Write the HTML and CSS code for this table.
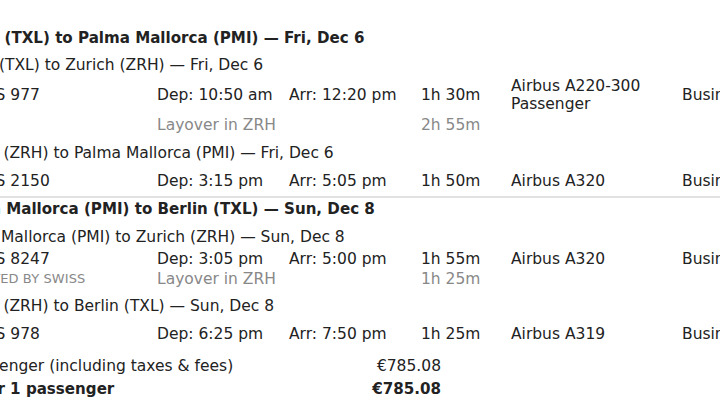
FILE: index.html
```html
<!DOCTYPE html>
<html>
<head>
<meta charset="utf-8">
<link rel="stylesheet" href="styles.css">
</head>
<body>
<div class="page">
  <section class="trip">
    <h2 class="trip-title">Berlin (TXL) to Palma Mallorca (PMI) — Fri, Dec 6</h2>
    <div class="leg">
      <div class="leg-title leg-title-first">Berlin (TXL) to Zurich (ZRH) — Fri, Dec 6</div>
      <div class="row row-tall">
        <div class="c-flight"><span class="flight-no">SWISS 977</span></div>
        <div class="c-dep">Dep: 10:50 am</div>
        <div class="c-arr">Arr: 12:20 pm</div>
        <div class="c-dur">1h 30m</div>
        <div class="c-craft">Airbus A220-300<br>Passenger</div>
        <div class="c-class">Business</div>
      </div>
      <div class="row layover">
        <div class="c-flight"></div>
        <div class="c-dep">Layover in ZRH</div>
        <div class="c-arr"></div>
        <div class="c-dur">2h 55m</div>
      </div>
    </div>
    <div class="leg">
      <div class="leg-title">Zurich (ZRH) to Palma Mallorca (PMI) — Fri, Dec 6</div>
      <div class="row">
        <div class="c-flight"><span class="flight-no">SWISS 2150</span></div>
        <div class="c-dep">Dep: 3:15 pm</div>
        <div class="c-arr">Arr: 5:05 pm</div>
        <div class="c-dur">1h 50m</div>
        <div class="c-craft">Airbus A320</div>
        <div class="c-class">Business</div>
      </div>
    </div>
  </section>
  <section class="trip trip-next">
    <h2 class="trip-title">Palma Mallorca (PMI) to Berlin (TXL) — Sun, Dec 8</h2>
    <div class="leg">
      <div class="leg-title">Palma Mallorca (PMI) to Zurich (ZRH) — Sun, Dec 8</div>
      <div class="row row-close">
        <div class="c-flight"><span class="flight-no">SWISS 8247</span></div>
        <div class="c-dep">Dep: 3:05 pm</div>
        <div class="c-arr">Arr: 5:00 pm</div>
        <div class="c-dur">1h 55m</div>
        <div class="c-craft">Airbus A320</div>
        <div class="c-class">Business</div>
      </div>
      <div class="row layover layover-tight">
        <div class="c-flight operated">OPERATED BY SWISS</div>
        <div class="c-dep">Layover in ZRH</div>
        <div class="c-arr"></div>
        <div class="c-dur">1h 25m</div>
      </div>
    </div>
    <div class="leg">
      <div class="leg-title leg-title-after">Zurich (ZRH) to Berlin (TXL) — Sun, Dec 8</div>
      <div class="row">
        <div class="c-flight"><span class="flight-no">SWISS 978</span></div>
        <div class="c-dep">Dep: 6:25 pm</div>
        <div class="c-arr">Arr: 7:50 pm</div>
        <div class="c-dur">1h 25m</div>
        <div class="c-craft">Airbus A319</div>
        <div class="c-class">Business</div>
      </div>
    </div>
  </section>
  <div class="prices">
    <div class="price-row">
      <span class="p-label">Per passenger (including taxes &amp; fees)</span>
      <span class="p-amount">€785.08</span>
    </div>
    <div class="price-row total">
      <span class="p-label">Total for 1 passenger</span>
      <span class="p-amount">€785.08</span>
    </div>
  </div>
</div>
</body>
</html>
```
FILE: styles.css
```css
html, body {
  margin: 0;
  padding: 0;
  background: #fff;
}
body {
  font-family: "DejaVu Sans", Verdana, sans-serif;
  font-size: 15.5px;
  color: #222;
  overflow: hidden;
}
.page {
  margin-left: -51px;
  width: 820px;
  padding-top: 28px;
}
.trip-title {
  margin: 0;
  font-size: 15.1px;
  font-weight: bold;
  line-height: 20px;
  height: 20px;
}
.trip-next {
  border-top: 2px solid #e2e2e2;
  margin-top: 5px;
  margin-left: -20px;
  padding-left: 20px;
  padding-top: 1px;
  width: 900px;
}
.leg-title {
  line-height: 20px;
  height: 20px;
  margin: 8px 0 8px;
}
.leg-title-first {
  margin-top: 7px;
}
.leg-title-after {
  margin-top: 7px;
}
.row {
  display: flex;
  align-items: center;
  height: 20px;
  line-height: 18px;
}
.row-tall {
  height: 38px;
  margin-top: -7px;
}
.row-close {
  margin-top: -6px;
}
.layover {
  color: #888;
  margin-top: 1px;
}
.layover-tight {
  margin-top: 0;
}
.c-flight { width: 208px; flex: none; }
.c-dep { width: 132px; flex: none; }
.c-arr { width: 132px; flex: none; }
.c-dur { width: 90px; flex: none; }
.c-craft { width: 171px; flex: none; }
.c-class { flex: none; }
.flight-no {
  margin-left: 7px;
}
.operated {
  font-size: 13px;
  letter-spacing: 0.1px;
}
.prices {
  margin-top: 12px;
  margin-left: -15px;
  width: 507px;
}
.price-row {
  display: flex;
  justify-content: space-between;
  height: 20px;
  line-height: 20px;
}
.price-row.total {
  margin-top: 3px;
  font-weight: bold;
  font-size: 15.1px;
}
.p-amount {
  text-align: right;
}
```
